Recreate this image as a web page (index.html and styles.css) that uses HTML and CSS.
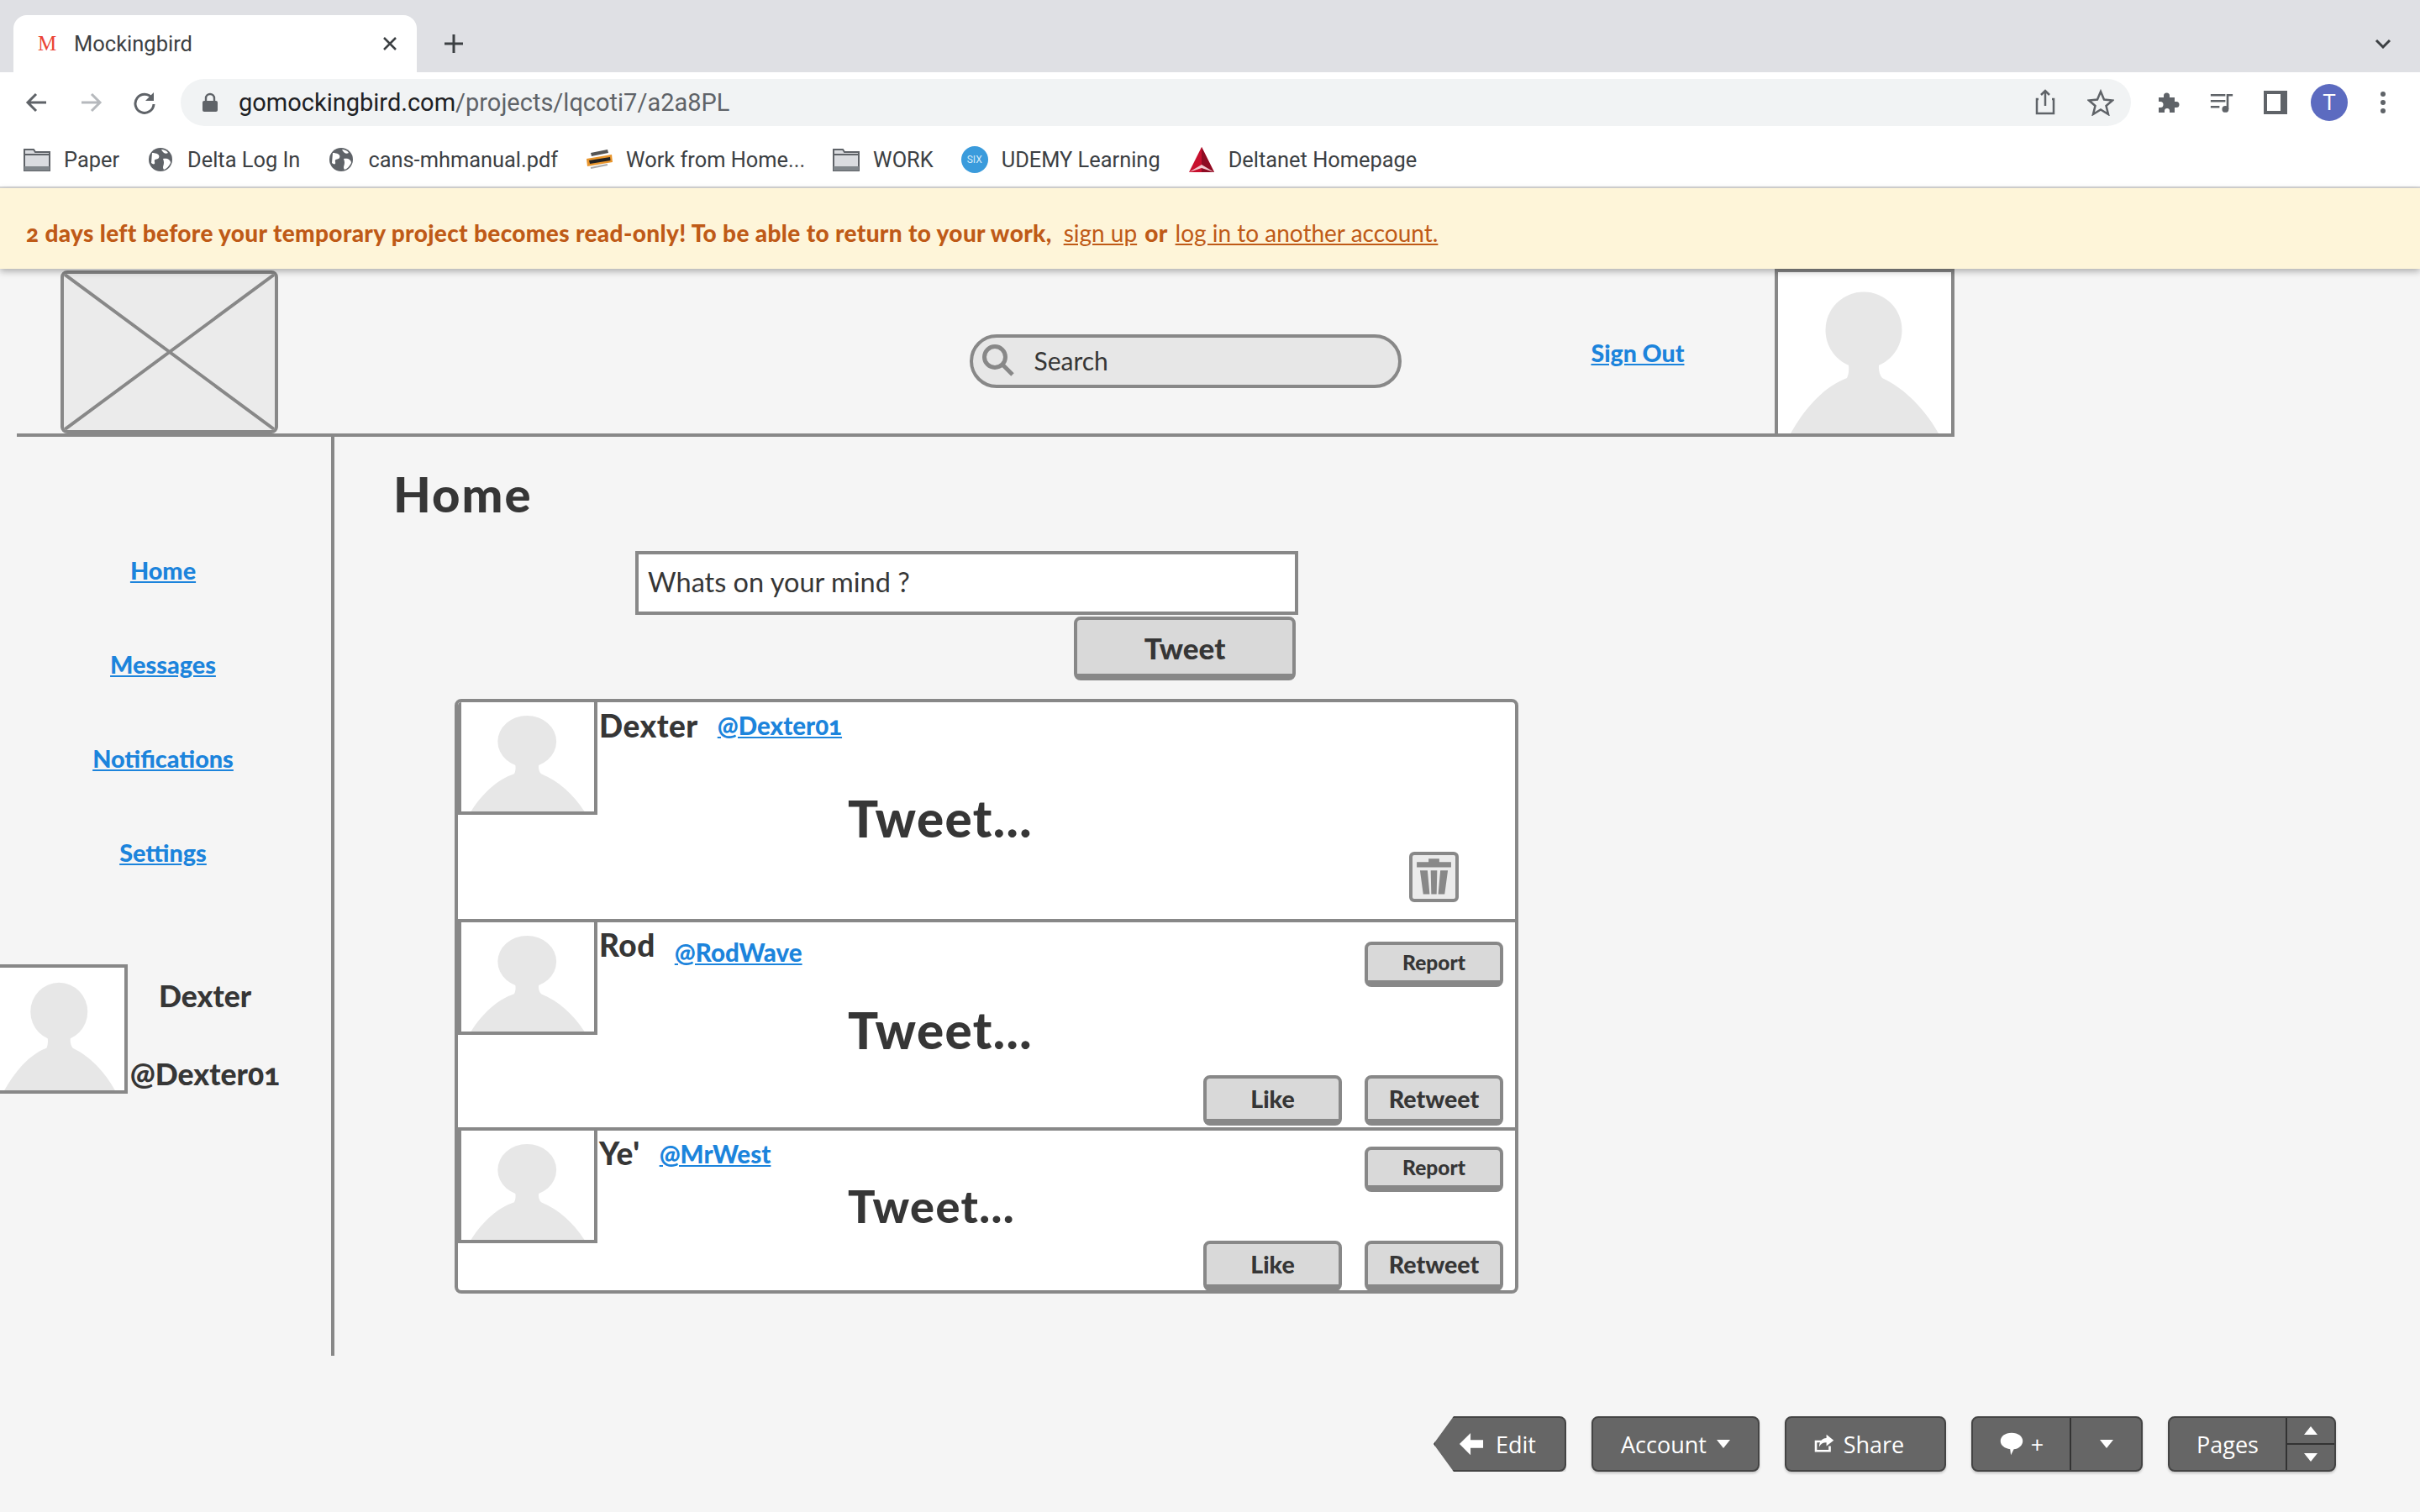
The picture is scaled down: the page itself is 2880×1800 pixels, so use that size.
FILE: index.html
```html
<!DOCTYPE html>
<html lang="en">
<head>
    <meta charset="UTF-8">
    <title>Mockingbird</title>
    <link rel="stylesheet" href="styles.css">
</head>
<body>
    <!-- Browser chrome -->
    <div class="tabstrip">
        <div class="tab">
            <span class="tab-icon">M</span>
            <span class="tab-title">Mockingbird</span>
            <svg class="tab-close" viewBox="0 0 20 20"><path d="M3 3L17 17M17 3L3 17"/></svg>
        </div>
        <svg class="new-tab" viewBox="0 0 24 24"><path d="M12 1V23M1 12H23"/></svg>
        <svg class="tab-list" viewBox="0 0 20 12"><path d="M2 2L10 10L18 2"/></svg>
    </div>

    <div class="toolbar">
        <svg class="tool-icon" viewBox="0 0 28 28"><path d="M25 14H4M13 4L3 14L13 24"/></svg>
        <svg class="tool-icon faded" viewBox="0 0 28 28"><path d="M3 14H24M15 4L25 14L15 24"/></svg>
        <svg class="tool-icon" viewBox="0 0 28 28"><path d="M23 9A11 11 0 1 0 25 16"/><path class="solid" d="M25 2V12H15Z"/></svg>
        <div class="urlbar">
            <svg class="lock" viewBox="0 0 18 24"><path d="M4 10V7A5 5 0 0 1 14 7V10" fill="none" stroke="#5f6368" stroke-width="2.4"/><rect y="10" width="18" height="13" rx="2" fill="#5f6368"/></svg>
            <span class="url"><b>gomockingbird.com</b>/projects/lqcoti7/a2a8PL</span>
            <svg class="url-icon" viewBox="0 0 24 32"><path d="M4 12H2V29H22V12H20M12 20V2M7 7L12 2L17 7"/></svg>
            <svg class="url-icon star" viewBox="0 0 32 32"><path d="M16 3L20 12.500L30 13.500L22.500 20L25 30L16 24.500L7 30L9.500 20L2 13.500L12 12.500Z"/></svg>
        </div>
        <div class="toolbar-right">
            <svg class="tool-icon" viewBox="0 0 28 28"><path class="solid" d="M3 8H9V6A3.500 3.500 0 0 1 16 6V8H22V13H24A3.500 3.500 0 0 1 24 20H22V26H16V24A3 3 0 0 0 10 24V26H3V20H5A3.500 3.500 0 0 0 5 13H3Z"/></svg>
            <svg class="tool-icon" viewBox="0 0 32 28"><path d="M1 4H21M1 12H21M1 20H13M24 23V4H31" stroke-width="3"/><circle class="solid" cx="21" cy="23" r="4.500"/></svg>
            <svg class="tool-icon side-panel" viewBox="0 0 28 28"><path class="solid" d="M0 0H28V28H0ZM4 4V24H20V4Z" fill-rule="evenodd"/></svg>
            <div class="profile">T</div>
            <svg class="tool-icon" viewBox="0 0 28 28"><circle class="solid" cx="14" cy="4" r="3"/><circle class="solid" cx="14" cy="14" r="3"/><circle class="solid" cx="14" cy="24" r="3"/></svg>
        </div>
    </div>

    <div class="bookmarks">
        <span class="bookmark">
            <svg class="mark-icon" viewBox="0 0 32 28"><path d="M1 2H12L14 5H31V27H1Z" fill="#dadce0" stroke="#5f6368" stroke-width="2"/><path d="M1 8H31" stroke="#5f6368" stroke-width="2"/><rect x="1" y="22" width="30" height="5" fill="#80868b"/></svg>
            Paper
        </span>
        <span class="bookmark">
            <svg class="mark-icon" viewBox="0 0 28 28"><circle cx="14" cy="14" r="14" fill="#5f6368"/><path d="M4 6C9 6 14 8 12 12C10 15 6 12 7 17C8 20 5 20 3 18ZM17 13C22 12 26 14 26 18C24 22 21 25 18 26C15 22 20 20 17 13ZM15 2C18 2 21 3 23 6C20 8 17 6 15 2Z" fill="#fff"/></svg>
            Delta Log In
        </span>
        <span class="bookmark">
            <svg class="mark-icon" viewBox="0 0 28 28"><circle cx="14" cy="14" r="14" fill="#5f6368"/><path d="M4 6C9 6 14 8 12 12C10 15 6 12 7 17C8 20 5 20 3 18ZM17 13C22 12 26 14 26 18C24 22 21 25 18 26C15 22 20 20 17 13ZM15 2C18 2 21 3 23 6C20 8 17 6 15 2Z" fill="#fff"/></svg>
            cans-mhmanual.pdf
        </span>
        <span class="bookmark">
            <svg class="mark-icon wide" viewBox="0 0 32 28"><path d="M6 6L26 2L27 6L7 10Z" fill="#555"/><path d="M1 13L31 8L32 17L2 22Z" fill="#e8952c"/><path d="M4 15L29 11L29.500 15L5 19Z" fill="#222"/><path d="M6 24L26 20" stroke="#aaa" stroke-width="2"/></svg>
            Work from Home...
        </span>
        <span class="bookmark">
            <svg class="mark-icon" viewBox="0 0 32 28"><path d="M1 2H12L14 5H31V27H1Z" fill="#dadce0" stroke="#5f6368" stroke-width="2"/><path d="M1 8H31" stroke="#5f6368" stroke-width="2"/><rect x="1" y="22" width="30" height="5" fill="#80868b"/></svg>
            WORK
        </span>
        <span class="bookmark">
            <span class="six">SIX</span>
            UDEMY Learning
        </span>
        <span class="bookmark">
            <svg class="mark-icon wide" viewBox="0 0 32 32"><path d="M16 1L31 31H1Z" fill="#c8102e"/><path d="M16 1L31 31H16Z" fill="#8e0c23"/><path d="M1 31L16 22L31 31L16 26Z" fill="#f3c9cf"/></svg>
            Deltanet Homepage
        </span>
    </div>

    <div class="notice">
        <b>2 days left before your temporary project becomes read-only! To be able to return to your work,</b>
        <a href="#" class="signup">sign up</a>
        <b class="or">or</b>
        <a href="#" class="login">log in to another account.</a>
    </div>

    <!-- Wireframe -->
    <div class="wire-top">
        <svg class="logo" viewBox="0 0 100 100" preserveAspectRatio="none"><path d="M0 0L100 100M100 0L0 100" vector-effect="non-scaling-stroke"/></svg>
        <div class="search">
            <svg class="search-icon" viewBox="0 0 40 40"><circle cx="16" cy="16" r="12.500"/><path d="M25 25L37 37"/></svg>
            Search
        </div>
        <a href="#" class="signout">Sign Out</a>
        <div class="photo photo-top">
            <svg viewBox="0 0 206 192" preserveAspectRatio="none"><use href="#person"/></svg>
        </div>
    </div>

    <div class="wire-page">
        <div class="side">
            <nav class="side-nav">
                <a href="#">Home</a>
                <a href="#">Messages</a>
                <a href="#">Notifications</a>
                <a href="#">Settings</a>
            </nav>
            <div class="me">
                <div class="photo photo-me">
                    <svg viewBox="0 0 206 192" preserveAspectRatio="none"><use href="#person"/></svg>
                </div>
                <div class="me-names">
                    <div class="me-name">Dexter</div>
                    <div>@Dexter01</div>
                </div>
            </div>
        </div>

        <main class="content">
            <h1>Home</h1>
            <div class="compose">
                <div class="compose-box">Whats on your mind ?</div>
                <div class="btn btn-tweet">Tweet</div>
            </div>

            <div class="feed">
                <div class="tweet tweet-one">
                    <div class="photo photo-thumb">
                        <svg viewBox="0 0 206 192" preserveAspectRatio="none"><use href="#person"/></svg>
                    </div>
                    <div class="tweet-main">
                        <div class="tweet-head"><span class="who">Dexter</span><a href="#" class="handle">@Dexter01</a></div>
                        <div class="tweet-text">Tweet...</div>
                        <div class="tweet-actions">
                            <div class="trash">
                                <svg viewBox="0 0 40 40"><path d="M15 6V3H25V6H36V11H4V6Z"/><path d="M7 14H14L16 36H10ZM17 14H23L22.500 36H17.500ZM26 14H33L30 36H24Z"/></svg>
                            </div>
                        </div>
                    </div>
                </div>

                <div class="tweet tweet-two">
                    <div class="photo photo-thumb">
                        <svg viewBox="0 0 206 192" preserveAspectRatio="none"><use href="#person"/></svg>
                    </div>
                    <div class="tweet-main">
                        <div class="tweet-head"><span class="who">Rod</span><a href="#" class="handle">@RodWave</a><div class="btn btn-report">Report</div></div>
                        <div class="tweet-text">Tweet...</div>
                        <div class="tweet-actions">
                            <div class="btn btn-small">Like</div>
                            <div class="btn btn-small">Retweet</div>
                        </div>
                    </div>
                </div>

                <div class="tweet tweet-three">
                    <div class="photo photo-thumb">
                        <svg viewBox="0 0 206 192" preserveAspectRatio="none"><use href="#person"/></svg>
                    </div>
                    <div class="tweet-main">
                        <div class="tweet-head"><span class="who">Ye'</span><a href="#" class="handle">@MrWest</a><div class="btn btn-report">Report</div></div>
                        <div class="tweet-text">Tweet...</div>
                        <div class="tweet-actions">
                            <div class="btn btn-small">Like</div>
                            <div class="btn btn-small">Retweet</div>
                        </div>
                    </div>
                </div>
            </div>
        </main>
    </div>

    <!-- Mockingbird controls -->
    <div class="controls">
        <div class="ctl ctl-edit">
            <svg class="ctl-icon" viewBox="0 0 32 32"><path d="M15 2V11H31V21H15V30L1 16Z"/></svg>
            Edit
        </div>
        <div class="ctl ctl-account">Account <span class="caret"></span></div>
        <div class="ctl ctl-share">
            <svg class="ctl-icon" viewBox="0 0 30 30"><path d="M2 10H12V13H5V23H21V18H24V26H2Z"/><path d="M18 2L28 10L18 18V13C13 13 10 15 8 19C8 12 12 7 18 7Z"/></svg>
            Share
        </div>
        <div class="ctl ctl-split">
            <div class="ctl-part ctl-comment">
                <svg class="ctl-icon bubble" viewBox="0 0 32 34"><path d="M16 2C25 2 31 7 31 13C31 19 25 24 19 24L15 32L14 24C7 23 1 19 1 13C1 7 7 2 16 2Z"/></svg>
                +
            </div>
            <div class="ctl-part ctl-more"><span class="caret"></span></div>
        </div>
        <div class="ctl ctl-split">
            <div class="ctl-part ctl-pages">Pages</div>
            <div class="ctl-arrows">
                <span class="arrow-cell"><span class="caret caret-up"></span></span>
                <span class="arrow-cell"><span class="caret"></span></span>
            </div>
        </div>
    </div>

    <svg class="defs" width="0" height="0">
        <defs>
            <g id="person">
                <circle cx="102" cy="69" r="45.500"/>
                <path d="M15 192C32 162 55 136 82 126C85 120 85 110 82 104L122 104C119 110 119 120 124 126C150 138 174 162 191 192Z"/>
            </g>
        </defs>
    </svg>
</body>
</html>
```

FILE: styles.css
```css
/* Base */
* {
    box-sizing: border-box;
}

html, body {
    height: 1800px;
}

body {
    margin: 0;
    background-color: #f5f5f5;
    color: #363636;
    font-family: 'Lato', sans-serif;
    font-variant-numeric: oldstyle-nums;
    overflow: hidden;
}

a {
    color: #1c84dc;
}

/* Tabs */
.tabstrip {
    height: 86px;
    background-color: #dfe0e4;
    display: flex;
    align-items: flex-end;
    position: relative;
    padding-left: 16px;
}

.tab {
    width: 480px;
    height: 68px;
    background-color: #fff;
    border-radius: 16px 16px 0 0;
    display: flex;
    align-items: center;
    padding: 0 22px 0 29px;
}

.tab-icon {
    color: #ea4335;
    font-family: 'Liberation Serif', serif;
    font-size: 25px;
    width: 43px;
}

.tab-title {
    font-family: 'Roboto', sans-serif;
    font-size: 25.500px;
    color: #3c4043;
    flex-grow: 1;
}

.tab-close {
    width: 20px;
    height: 20px;
    fill: none;
    stroke: #3c4043;
    stroke-width: 2.500;
}

.new-tab {
    width: 24px;
    height: 24px;
    fill: none;
    stroke: #3c4043;
    stroke-width: 3;
    margin: 0 0 22px 32px;
}

.tab-list {
    width: 20px;
    height: 12px;
    fill: none;
    stroke: #3c4043;
    stroke-width: 3;
    margin: 0 0 28px auto;
    margin-right: 34px;
}

/* Toolbar */
.toolbar {
    height: 72px;
    background-color: #fff;
    display: flex;
    align-items: center;
    padding-left: 30px;
    gap: 36px;
    font-variant-numeric: normal;
}

.tool-icon {
    width: 28px;
    height: 28px;
    flex-shrink: 0;
    fill: none;
    stroke: #5f6368;
    stroke-width: 3;
}

.tool-icon.faded {
    stroke: #b6b9bd;
}

.tool-icon .solid {
    fill: #5f6368;
    stroke: none;
}

.urlbar {
    width: 2321px;
    height: 56px;
    margin-left: -7px;
    background-color: #f1f3f4;
    border-radius: 28px;
    display: flex;
    align-items: center;
    padding-left: 26px;
}

.lock {
    width: 18px;
    height: 24px;
    margin-right: 25px;
}

.url {
    font-family: 'Roboto', sans-serif;
    font-size: 29px;
    color: #5f6368;
    flex-grow: 1;
}

.url b {
    font-weight: 400;
    color: #202124;
}

.url-icon {
    width: 24px;
    height: 32px;
    fill: none;
    stroke: #5f6368;
    stroke-width: 2.500;
    margin-right: 38px;
}

.url-icon.star {
    width: 32px;
    margin-right: 20px;
}

.toolbar-right {
    display: flex;
    align-items: center;
    gap: 36px;
    margin-left: -6px;
}

.side-panel {
    margin-left: 0;
}

.profile {
    width: 44px;
    height: 44px;
    margin: 0 -8px;
    border-radius: 50%;
    background-color: #5c6bc0;
    color: #fff;
    font-family: 'Roboto', sans-serif;
    font-size: 26px;
    display: flex;
    align-items: center;
    justify-content: center;
}

/* Bookmarks */
.bookmarks {
    height: 66px;
    background-color: #fff;
    border-bottom: 2px solid #d8d8d8;
    display: flex;
    align-items: center;
    padding-left: 28px;
    gap: 33px;
}

.bookmark {
    display: flex;
    align-items: center;
    gap: 16px;
    font-family: 'Roboto', sans-serif;
    font-size: 25.400px;
    color: #3c4043;
    white-space: nowrap;
}

.mark-icon {
    width: 32px;
    height: 28px;
}

.mark-icon.wide {
    height: 32px;
}

.six {
    width: 32px;
    height: 32px;
    border-radius: 50%;
    background-color: #3a9bdc;
    color: #d6ecfa;
    font-size: 12px;
    display: flex;
    align-items: center;
    justify-content: center;
}

/* Bandeau jaune */
.notice {
    height: 96px;
    background-color: #fef5d9;
    color: #bf5a17;
    font-size: 28px;
    display: flex;
    align-items: center;
    padding: 10px 0 0 31px;
    box-shadow: 0 3px 8px rgba(0, 0, 0, 0.3);
    position: relative;
    white-space: nowrap;
}

.notice b {
    font-weight: 900;
    letter-spacing: 0.350px;
}

.notice a {
    color: #bf5a17;
}

.signup {
    margin-left: 14px;
}

.or {
    margin: 0 9px;
}

/* Wireframe header */
.wire-top {
    width: 2306px;
    height: 200px;
    margin-left: 20px;
    border-bottom: 4px solid #888;
    display: flex;
    align-items: flex-start;
}

.logo {
    width: 260px;
    height: 194px;
    margin: 2px 0 0 52px;
    background-color: #ebebeb;
    border: 4px solid #888;
    border-radius: 8px;
    fill: none;
    stroke: #888;
    stroke-width: 4;
}

.search {
    width: 515px;
    height: 64px;
    margin: 78px 0 0 823px;
    background-color: #e7e7e7;
    border: 4px solid #888;
    border-radius: 32px;
    display: flex;
    align-items: center;
    gap: 22px;
    padding: 0 0 2px 10px;
    font-size: 30px;
}

.search-icon {
    width: 40px;
    height: 40px;
    fill: none;
    stroke: #888;
    stroke-width: 5;
}

.signout {
    margin: 80px 0 0 225px;
    font-size: 28.500px;
    line-height: 40px;
    font-weight: 900;
    width: 219px;
}

/* Placeholder photo */
.photo {
    background-color: #fff;
    border: 4px solid #888;
    flex-shrink: 0;
}

.photo svg {
    display: block;
    width: 100%;
    height: 100%;
    fill: #e7e7e7;
}

.photo-top {
    width: 214px;
    height: 200px;
}

.photo-me {
    width: 162px;
    height: 154px;
    margin-left: -10px;
}

.photo-thumb {
    width: 166px;
    height: 134px;
    border-top: 0;
}

/* Wireframe body */
.wire-page {
    display: flex;
    height: 1094px;
}

.side {
    width: 398px;
    border-right: 4px solid #888;
    display: flex;
    flex-direction: column;
}

.side-nav {
    display: flex;
    flex-direction: column;
    align-items: center;
    gap: 72px;
    padding: 139px 6px 0 0;
    font-size: 28.800px;
    line-height: 40px;
    font-weight: 900;
}

.me {
    display: flex;
    margin-top: 113px;
    font-size: 35.500px;
    line-height: 46px;
    font-weight: 900;
}

.me-names {
    width: 180px;
    margin-left: 2px;
    text-align: center;
    padding-top: 15px;
}

.me-name {
    margin-bottom: 47px;
}

.content {
    flex-grow: 1;
    padding: 28px 0 0 73px;
}

h1 {
    margin: 0 0 0 -3px;
    font-size: 58px;
    line-height: 80px;
    font-weight: 900;
    letter-spacing: 2px;
}

.compose {
    width: 789px;
    margin: 28px 0 0 285px;
    display: flex;
    flex-direction: column;
    align-items: flex-end;
}

.compose-box {
    width: 100%;
    height: 76px;
    background-color: #fff;
    border: 4px solid #888;
    font-size: 32.500px;
    line-height: 66px;
    padding-left: 11px;
}

.btn {
    background-color: #d9d9d9;
    border: 4px solid #888;
    border-bottom-width: 8px;
    border-radius: 8px;
    font-weight: 900;
    display: flex;
    align-items: center;
    justify-content: center;
}

.btn-tweet {
    width: 264px;
    height: 76px;
    margin: 2px 3px 0 0;
    padding-top: 2px;
    font-size: 35px;
}

/* Liste de tweets */
.feed {
    width: 1266px;
    margin: 22px 0 0 70px;
    background-color: #fff;
    border: 4px solid #888;
    border-radius: 8px;
    overflow: hidden;
}

.tweet {
    display: flex;
    border-bottom: 4px solid #888;
}

.tweet:last-child {
    border-bottom: 0;
}

.tweet-one {
    height: 262px;
}

.tweet-two {
    height: 248px;
}

.tweet-three {
    height: 190px;
}

.tweet-main {
    flex-grow: 1;
    display: flex;
    flex-direction: column;
    padding: 0 14px 0 2px;
}

.tweet-head {
    display: flex;
    align-items: center;
    height: 54px;
}

.who {
    font-size: 37px;
    font-weight: 900;
    letter-spacing: 0.500px;
    margin-right: 23px;
}

.handle {
    font-size: 29.500px;
    font-weight: 900;
}

.btn-report {
    width: 165px;
    height: 54px;
    margin: 21px 0 0 auto;
    font-size: 24.500px;
}

.tweet-two .tweet-head {
    height: 74px;
}

.tweet-two .who {
    margin-top: -22px;
}

.tweet-two .handle {
    margin-top: -4px;
}

.tweet-two .btn-report {
    margin-top: 25px;
}

.tweet-three .tweet-head {
    height: 72px;
}

.tweet-three .who {
    margin-top: -20px;
}

.tweet-three .handle {
    margin-top: -18px;
}

.tweet-three .btn-report {
    margin-top: 19px;
}

.tweet-text {
    font-size: 60px;
    line-height: 80px;
    font-weight: 900;
    letter-spacing: 1.400px;
    margin-left: 296px;
}

.tweet-one .tweet-text {
    margin-top: 44px;
}

.tweet-two .tweet-text {
    margin-top: 14px;
}

.tweet-three .tweet-text {
    margin-top: -12px;
    font-size: 54px;
    line-height: 60px;
}

.tweet-actions {
    margin-top: auto;
    display: flex;
    justify-content: flex-end;
    gap: 27px;
    padding-bottom: 2px;
}

.tweet-three .tweet-actions {
    padding-bottom: 0;
    margin-bottom: -1px;
}

.btn-small {
    width: 165px;
    height: 60px;
    font-size: 28.500px;
}

.trash {
    width: 59px;
    height: 60px;
    margin: 0 53px 18px 0;
    background-color: #ebebeb;
    border: 4px solid #888;
    border-radius: 6px;
}

.trash svg {
    display: block;
    width: 100%;
    height: 100%;
    fill: #888;
}

/* Boutons du bas */
.controls {
    display: flex;
    justify-content: flex-end;
    gap: 30px;
    padding: 72px 100px 0 0;
    font-family: 'Open Sans', sans-serif;
}

.ctl {
    height: 66px;
    background-color: #666;
    border: 2px solid #444;
    border-radius: 8px;
    box-shadow: 0 2px 3px rgba(0, 0, 0, 0.2);
    color: #fff;
    font-size: 27px;
    display: flex;
    align-items: center;
    justify-content: center;
    gap: 12px;
}

.ctl-edit {
    width: 158px;
    clip-path: polygon(24px 0, 100% 0, 100% 100%, 24px 100%, 0 50%);
    padding-right: 6px;
    gap: 14px;
}

.ctl-account {
    width: 200px;
}

.ctl-share {
    width: 192px;
    gap: 10px;
    padding-right: 16px;
}

.ctl-icon {
    width: 30px;
    height: 30px;
    fill: #fff;
}

.ctl-share .ctl-icon {
    width: 26px;
    height: 26px;
}

.caret {
    display: inline-block;
    border-left: 8px solid transparent;
    border-right: 8px solid transparent;
    border-top: 10px solid #fff;
}

.caret-up {
    border-top: 0;
    border-bottom: 10px solid #fff;
}

.ctl-split {
    gap: 0;
    align-items: stretch;
}

.ctl-part {
    display: flex;
    align-items: center;
    justify-content: center;
    gap: 8px;
}

.ctl-comment {
    width: 117px;
    border-right: 2px solid #333;
}

.ctl-more {
    width: 83px;
}

.ctl-pages {
    width: 140px;
    border-right: 2px solid #333;
}

.ctl-arrows {
    width: 56px;
    display: flex;
    flex-direction: column;
}

.arrow-cell {
    flex: 1;
    display: flex;
    align-items: center;
    justify-content: center;
}

.arrow-cell:first-child {
    border-bottom: 2px solid #333;
}

.defs {
    position: absolute;
}
```
